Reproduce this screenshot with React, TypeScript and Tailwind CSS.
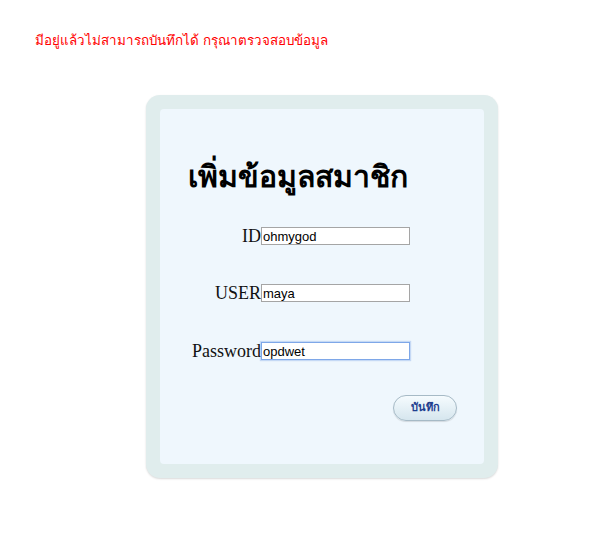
export default function App() {
  return (
    <div className="w-[611px] h-[553px] bg-white" style={{ fontFamily: "Tahoma, 'DejaVu Sans', 'Noto Sans', sans-serif" }}>
      <div className="pt-[31px] pl-[35px] text-[13.4px] text-[#ff0000] leading-[20px]">
        มีอยู่แล้วไม่สามารถบันทึกได้ กรุณาตรวจสอบข้อมูล
      </div>

      <div className="ml-[146px] mt-[44px] w-[352px] h-[383px] rounded-[14px] bg-[#e0eded] p-[14px] shadow-[0_1px_2px_rgba(0,0,0,0.15)]">
        <div className="h-full rounded-[4px] bg-[#eff7fd] pl-[28px] pt-[49px]">
          <h1 className="text-[30.2px] font-bold leading-[38px] text-black">เพิ่มข้อมูลสมาชิก</h1>

          <div className="mt-[31px] flex flex-col gap-[39px] font-['Liberation_Serif',serif] text-[18px] text-[#111]">
            {[
              { label: "ID", value: "ohmygod" },
              { label: "USER", value: "maya" },
              { label: "Password", value: "opdwet", focus: true },
            ].map((f, i) => (
              <div key={f.label} className={`flex items-end ${i === 2 ? "mt-[1px]" : ""}`}>
                <span className="w-[73px] text-right leading-[18px]">{f.label}</span>
                <input
                  defaultValue={f.value}
                  className={`h-[18px] w-[149px] bg-white px-[1px] text-[13px] leading-[16px] text-black font-['Liberation_Sans',Arial,sans-serif] outline-none ${
                    f.focus ? "border border-[#7ea7e8] shadow-[0_0_1px_1px_rgba(120,160,230,0.35)]" : "border border-[#a5a5a5]"
                  }`}
                />
              </div>
            ))}
          </div>

          <div className="mt-[35px] flex justify-end pr-[27px]">
            <button className="h-[26px] w-[64px] rounded-full border border-[#a6bac6] bg-gradient-to-b from-[#f5fbfe] to-[#d6e6ee] text-[11px] font-bold text-[#1f3f8f] shadow-[0_1px_1px_rgba(0,0,0,0.12)]">
              บันทึก
            </button>
          </div>
        </div>
      </div>
    </div>
  );
}
